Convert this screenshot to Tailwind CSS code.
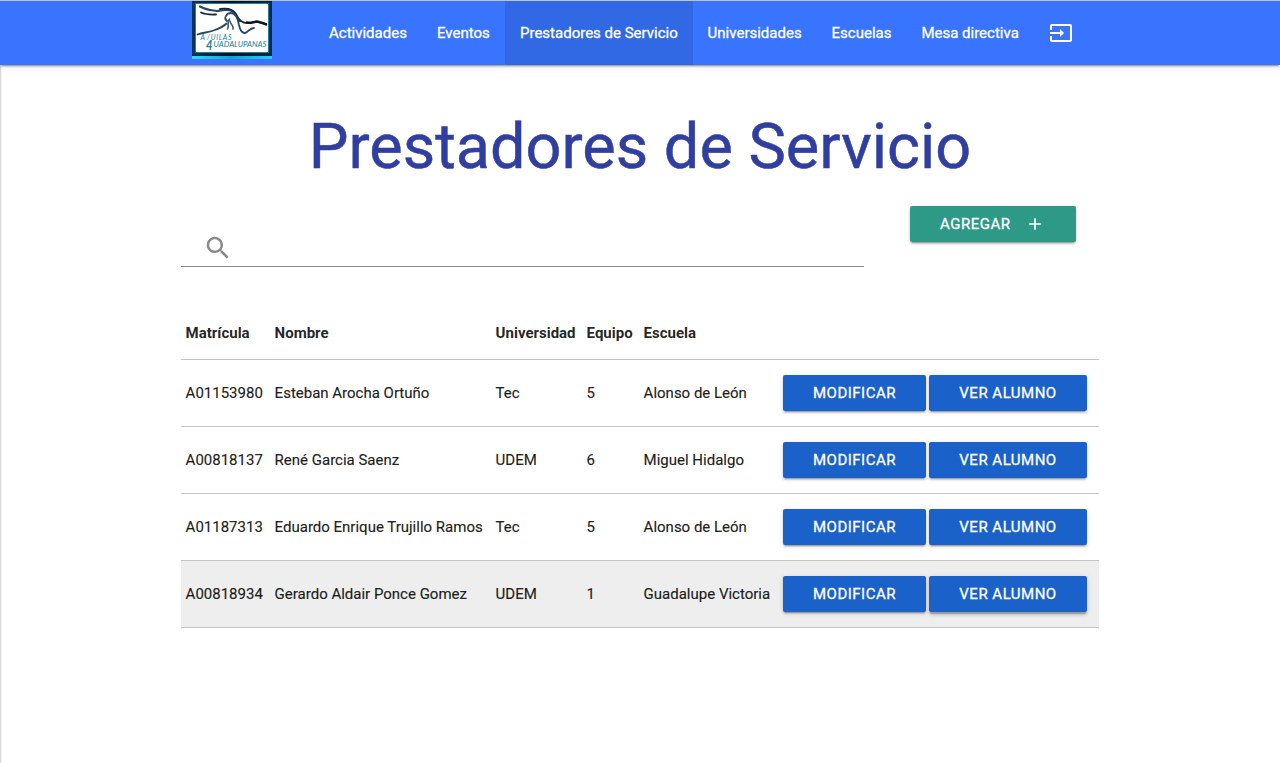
<!DOCTYPE html>
<html lang="es">
<head>
<meta charset="utf-8">
<title>Prestadores de Servicio</title>
<script src="https://cdn.jsdelivr.net/npm/@tailwindcss/browser@4"></script>
</head>
<body class="h-[763px] overflow-hidden border-t border-[#c0c0c0] bg-white font-[Roboto,sans-serif] text-[15px] leading-[22px] text-black/87 shadow-[inset_3px_0_2px_-2px_rgba(0,0,0,0.2)]">
<nav class="flex h-16 bg-[#3874ff] pl-48 text-white shadow-[0_2px_2px_0_rgba(0,0,0,0.14),0_1px_5px_0_rgba(0,0,0,0.12),0_3px_1px_-2px_rgba(0,0,0,0.2)]">
  <svg class="h-[58px] w-20 shrink-0" viewBox="0 0 80 58">
    <defs>
      <linearGradient id="frame" x2="1"><stop stop-color="#06365a"/><stop offset=".45" stop-color="#03101c"/><stop offset="1" stop-color="#06283f"/></linearGradient>
      <linearGradient id="foot" x2="1"><stop stop-color="#38d6fa"/><stop offset=".5" stop-color="#0aa5cd"/><stop offset="1" stop-color="#25cdf5"/></linearGradient>
    </defs>
    <path fill="url(#frame)" d="M0 0h80v58H0z"/>
    <path fill="url(#foot)" d="M0 55h80v3H0z"/>
    <path fill="#fff" stroke="#1184ac" d="M3.500 2.500h73v49h-73z"/>
    <g fill="none" stroke-linecap="round" stroke-linejoin="round">
      <path stroke="#2b4868" stroke-width="2.200" d="M8 5.500c6 3.500 11 3.500 17 4.500 6-1 11-2 15 0 4 2 5 8 8 10"/>
      <path stroke="#16283f" stroke-width="1.800" d="M9 11.500c5 2.500 10 2 15 2M28 8c7-1 13 0 16 5 3 7 8 10 14 9"/>
      <path stroke="#2b4868" stroke-width="1.800" d="M5.500 33.500c5-2 11-2 16-4 6-2 9-3 13-7M35 20c-4-3 0-8 4-8 5 0 7 6 8 12 1 5 3 8 6 8s4-5 9-5"/>
      <path stroke="#3c5876" stroke-width="1.600" d="M35.500 28c2-4-1-7 2-10M38 20c0 3 4 4 3 8"/>
      <path stroke="#0b1623" stroke-width="2.600" d="M55 21.500c5 1 7-1.500 11-.7 3 .7 5 1.500 8 2.500"/>
    </g>
    <g fill="#21809e" font-family="Lato,sans-serif">
      <text x="8.500" y="38.500" font-size="7" font-style="italic" textLength="31">A&#8201;/UILAS</text>
      <text x="14" y="48.500" font-size="13" font-weight="700" font-style="italic" textLength="6.500" lengthAdjust="spacingAndGlyphs">4</text>
      <text x="21.500" y="46" font-size="7" font-style="italic" textLength="53" lengthAdjust="spacingAndGlyphs">UADALUPANAS</text>
    </g>
  </svg>
  <ul class="ml-[42px] flex leading-16 [-webkit-text-stroke:0.3px_currentColor]">
    <li class="w-[108px] whitespace-nowrap px-[15px]">Actividades</li>
    <li class="w-[83px] whitespace-nowrap px-[15px]">Eventos</li>
    <li class="w-[188px] whitespace-nowrap bg-[#3169e5] px-[15px]">Prestadores de Servicio</li>
    <li class="w-[124px] whitespace-nowrap px-[14.600px]">Universidades</li>
    <li class="w-[90px] whitespace-nowrap px-[14.600px]">Escuelas</li>
    <li class="w-[127px] whitespace-nowrap px-[14.400px]">Mesa directiva</li>
    <li class="flex items-center px-[15px]">
      <svg class="size-6" viewBox="0 0 24 24" fill="currentColor"><path d="M21 3.010H3c-1.100 0-2 .9-2 2V9h2V4.990h18v14.030H3V15H1v4.010c0 1.100.9 1.980 2 1.980h18c1.100 0 2-.88 2-1.980v-14c0-1.110-.9-2-2-2zM11 16l4-4-4-4v3H1v2h10v3z"/></svg>
    </li>
  </ul>
</nav>
<main class="mx-auto w-[918px]">
  <h1 class="pt-[47px] text-center text-[63px] leading-[69px] text-[#303f9f] [-webkit-text-stroke:0.5px_currentColor]">Prestadores de Servicio</h1>
  <div class="mt-[25px] flex h-[61px] items-start justify-between pr-[23px]">
    <div class="flex h-full w-[683px] items-end border-b border-[#8c8c8c] pb-[3px] pl-[22px] text-[#8a8a8a]">
      <svg class="size-[30px]" viewBox="0 0 24 24" fill="currentColor"><path d="M15.500 14h-.79l-.28-.27C15.410 12.590 16 11.110 16 9.500 16 5.910 13.090 3 9.500 3S3 5.910 3 9.500 5.910 16 9.500 16c1.610 0 3.090-.59 4.230-1.570l.27.28v.79l5 4.990L20.490 19l-4.990-5zm-6 0C7.010 14 5 11.990 5 9.500S7.010 5 9.500 5 14 7.010 14 9.500 11.990 14 9.500 14z"/></svg>
    </div>
    <button class="flex h-9 w-[166px] items-center rounded-[2px] bg-[#2e9987] pl-[30px] tracking-[.5px] text-white shadow-[0_2px_2px_0_rgba(0,0,0,0.14),0_1px_5px_0_rgba(0,0,0,0.12),0_3px_1px_-2px_rgba(0,0,0,0.2)] [-webkit-text-stroke:0.3px_currentColor]">AGREGAR
      <svg class="ml-[15px] size-5" viewBox="0 0 24 24" fill="currentColor"><path d="M19 13h-6v6h-2v-6H5v-2h6V5h2v6h6v2z"/></svg>
    </button>
  </div>
  <div id="tabla" class="mt-10">
    <div class="grid h-[53px] grid-cols-[89px_221px_91px_57px_139px_1fr] items-center border-b border-[#c4c4c4] pl-[5px] font-bold">
      <span class="-ml-[.4px]">Matrícula</span><span class="-ml-[.4px]">Nombre</span><span class="-ml-[.4px]">Universidad</span><span class="-ml-[.4px]">Equipo</span><span class="-ml-[.4px]">Escuela</span>
    </div>
  </div>
</main>
<template id="fila">
  <div class="grid h-[67px] grid-cols-[89px_221px_91px_57px_139px_1fr] items-center whitespace-nowrap border-b border-[#c4c4c4] pl-[5px] [-webkit-text-stroke:0.2px_currentColor] last:bg-[#eeeeee]">
    <span class="-ml-[.4px]"></span><span class="-ml-[.4px]"></span><span class="-ml-[.4px]"></span><span class="-ml-[.4px]"></span><span class="-ml-[.4px]"></span>
    <div class="flex gap-[3px] text-white [-webkit-text-stroke:0.3px_currentColor]">
      <button class="h-9 w-[143px] rounded-[2px] bg-[#1b61ca] tracking-[.5px] shadow-[0_2px_2px_0_rgba(0,0,0,0.14),0_1px_5px_0_rgba(0,0,0,0.12),0_3px_1px_-2px_rgba(0,0,0,0.2)]">MODIFICAR</button>
      <button class="h-9 w-[158px] rounded-[2px] bg-[#1b61ca] tracking-[.5px] shadow-[0_2px_2px_0_rgba(0,0,0,0.14),0_1px_5px_0_rgba(0,0,0,0.12),0_3px_1px_-2px_rgba(0,0,0,0.2)] in-[.grid:last-child]:shadow-[0_3px_3px_0_rgba(0,0,0,0.14),0_1px_7px_0_rgba(0,0,0,0.12),0_3px_1px_-1px_rgba(0,0,0,0.2)]">VER ALUMNO</button>
    </div>
  </div>
</template>
<script>
const alumnos = [
  ["A01153980", "Esteban Arocha Ortuño", "Tec", "5", "Alonso de León"],
  ["A00818137", "René Garcia Saenz", "UDEM", "6", "Miguel Hidalgo"],
  ["A01187313", "Eduardo Enrique Trujillo Ramos", "Tec", "5", "Alonso de León"],
  ["A00818934", "Gerardo Aldair Ponce Gomez", "UDEM", "1", "Guadalupe Victoria"]
];
for (const alumno of alumnos) {
  const fila = document.getElementById("fila").content.cloneNode(true);
  fila.querySelectorAll("span").forEach((celda, i) => celda.textContent = alumno[i]);
  document.getElementById("tabla").append(fila);
}
</script>
</body>
</html>
